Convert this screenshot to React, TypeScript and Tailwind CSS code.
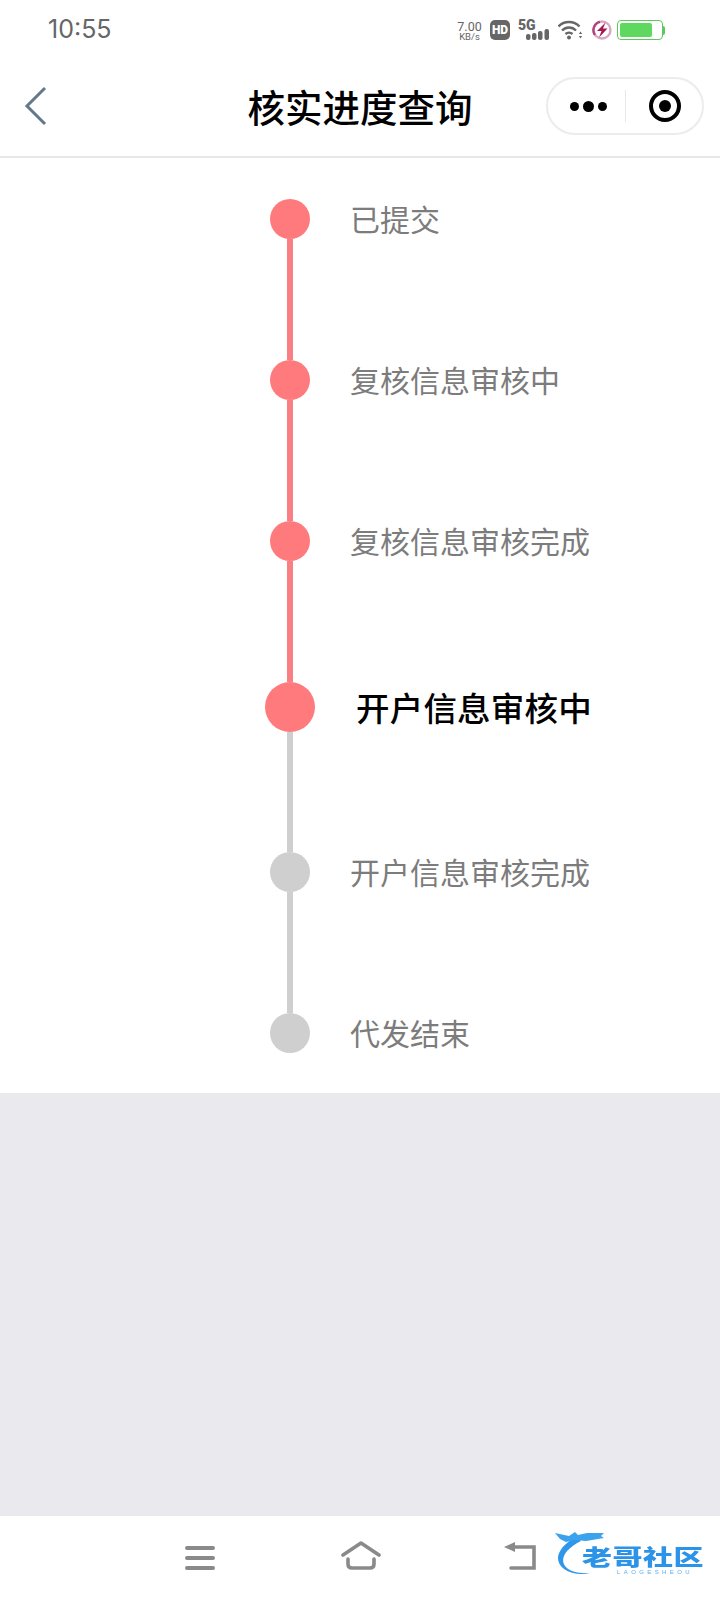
const cjk = "font-['Noto_Sans_CJK_SC','Noto_Sans',sans-serif]";

type Step = { label: string; state: "done" | "current" | "todo" };

const steps: Step[] = [
  { label: "已提交", state: "done" },
  { label: "复核信息审核中", state: "done" },
  { label: "复核信息审核完成", state: "done" },
  { label: "开户信息审核中", state: "current" },
  { label: "开户信息审核完成", state: "todo" },
  { label: "代发结束", state: "todo" },
];

function StatusIcons() {
  return (
    <div className="flex items-center">
      <div className="w-[27px] text-center font-['Roboto',sans-serif] text-[#666] leading-[10px] mr-[7px] mt-[4px]">
        <div className="text-[12.5px]">7.00</div>
        <div className="text-[9.5px]">KB/s</div>
      </div>
      {/* HD */}
      <div className="w-[20px] h-[20px] rounded-[5px] bg-[#666] text-white text-[12px] font-black font-['Roboto',sans-serif] flex items-center justify-center mr-[8px]">
        HD
      </div>
      {/* 5G + signal */}
      <div className="relative w-[31px] h-[20px] mr-[9px]">
        <span className="absolute left-0 top-[-3px] text-[14px] leading-[16px] font-black font-['Roboto',sans-serif] text-[#666]">5G</span>
        <svg className="absolute left-[8px] top-[9px]" width="23" height="11" viewBox="0 0 23 11" fill="#666">
          <rect x="0" y="5" width="4.5" height="6" rx="2" />
          <rect x="6" y="4" width="4.5" height="7" rx="2" />
          <rect x="12" y="2" width="4.5" height="9" rx="2" />
          <rect x="18.5" y="0" width="4.5" height="11" rx="2" />
        </svg>
      </div>
      {/* wifi */}
      <svg className="mr-[10px]" width="24" height="20" viewBox="0 0 24 20" fill="none" stroke="#666" strokeWidth="2.4">
        <path d="M0.5 6.5C6 0.5 16 0.5 21.5 6.5" />
        <path d="M4 10.5C8 6.5 14 6.5 18 10.5" />
        <path d="M7.5 14C9.5 12.2 12.5 12.2 14.5 14" />
        <circle cx="11" cy="17.5" r="2" fill="#666" stroke="none" />
        <path d="M22.5 11.5l-1.6 2.5h3.2zM22.5 18.5l-1.6-2.5h3.2z" fill="#666" stroke="none" />
      </svg>
      {/* charge badge */}
      <svg className="mr-[5px]" width="20" height="20" viewBox="0 0 20 20">
        <circle cx="10" cy="10" r="8.5" fill="none" stroke="#d9a8c2" strokeWidth="2.4" />
        <path d="M3 15A8.5 8.5 0 0 1 8 1.8" fill="none" stroke="#b0457f" strokeWidth="2.4" />
        <path d="M13.5 2.5L5 11h4.5L7 17.5 15.5 8.5H11z" fill="#a8174f" />
      </svg>
      {/* battery */}
      <div className="flex items-center">
        <div className="w-[46px] h-[20px] rounded-[4px] border border-[#5cc95c] p-[2px]">
          <div className="w-[32px] h-full rounded-[2px] bg-[#5fd85f]" />
        </div>
        <div className="w-[2px] h-[9px] rounded-r-[2px] bg-[#5cc95c]" />
      </div>
    </div>
  );
}

function StepRow({ step, showLine }: { step: Step; showLine: boolean }) {
  const current = step.state === "current";
  const dotColor = step.state === "todo" ? "bg-[#cfcfcf]" : "bg-[#ff7a7d]";
  return (
    <>
      <div className={`flex items-center ${current ? "h-[50px]" : "h-[40px]"}`}>
        <div className="w-[580px] flex justify-center shrink-0 -mr-[230px]">
          <div className={`rounded-full ${dotColor} ${current ? "w-[50px] h-[50px]" : "w-[40px] h-[40px]"}`} />
        </div>
        <span
          className={
            current
              ? "ml-[6px] text-[33.5px] font-medium tracking-[0.2px] text-black leading-none whitespace-nowrap"
              : "text-[30px] text-[#7c7c7c] leading-none whitespace-nowrap -mt-[2px]"
          }
        >
          {step.label}
        </span>
      </div>
      {showLine && (
        <div className="w-[580px] flex justify-center">
          <div
            className={`w-[6px] ${step.state === "done" ? "bg-[#f97f84]" : "bg-[#cfcfcf]"} ${
              current ? "h-[120px]" : "h-[121px]"
            }`}
          />
        </div>
      )}
    </>
  );
}

function Logo() {
  return (
    <div className="absolute left-[552px] top-[1531px] w-[160px] h-[50px] blur-[0.4px]">
      <svg className="absolute left-0 top-0" width="60" height="50" viewBox="0 0 60 50" fill="none">
        <path d="M24 6C7 15 0 29 12 38c7 5 17 6 26 4-9 0-20 0-25-7C8 28 13 18 29 10z" fill="#2f97ea" />
        <path d="M3 2l14 3 6-4 3 3 9-2 17 0-3 3 3 2-18 3-12-1-8 2-6-3z" fill="#3ba3ee" />
      </svg>
      <div className={`absolute left-[30px] top-[12px] scale-y-[0.72] origin-center text-[#2b93e8] text-[30px] tracking-[0.5px] leading-[26px] font-black whitespace-nowrap ${cjk}`}>
        老哥社区
      </div>
      <div className="absolute left-[65px] top-[38px] text-[#5aaeea] text-[6px] leading-[6px] tracking-[3.4px] font-['Liberation_Sans',sans-serif] whitespace-nowrap">
        LAOGESHEOU
      </div>
    </div>
  );
}

export default function App() {
  return (
    <div className={`relative w-[720px] h-[1600px] flex flex-col bg-[#e9e9ee] overflow-hidden ${cjk}`}>
      {/* Status bar */}
      <div className="h-[60px] bg-white flex items-center justify-between pl-[48px] pr-[55px]">
        <span className="text-[25px] text-[#666] font-['Inter',sans-serif] leading-none -mt-[2px]">10:55</span>
        <StatusIcons />
      </div>

      {/* Title bar */}
      <div className="relative h-[98px] bg-white border-b-2 border-[#e8e8e8] flex items-center justify-center">
        <svg className="absolute left-[24px] top-[25px]" width="24" height="42" viewBox="0 0 24 42" fill="none" stroke="#63788a" strokeWidth="3">
          <path d="M21 3L3 21 21 39" />
        </svg>
        <h1 className="text-[37.5px] font-medium text-black leading-none -mt-[5px]">核实进度查询</h1>
        <div className="absolute left-[546px] top-[17px] w-[158px] h-[58px] rounded-full border-2 border-[#ececec] bg-white flex items-center">
          <div className="w-[77px] flex items-center justify-center gap-[4px] pl-[3px]">
            <span className="w-[9px] h-[9px] rounded-full bg-black" />
            <span className="w-[11px] h-[11px] rounded-full bg-black" />
            <span className="w-[9px] h-[9px] rounded-full bg-black" />
          </div>
          <div className="w-[1px] h-[32px] bg-[#e8e8e8]" />
          <div className="flex-1 flex items-center justify-center pl-[1px]">
            <div className="w-[32px] h-[32px] rounded-full border-[4px] border-black flex items-center justify-center">
              <div className="w-[12px] h-[12px] rounded-full bg-black" />
            </div>
          </div>
        </div>
      </div>

      {/* Steps */}
      <div className="h-[935px] bg-white pt-[41px] flex flex-col">
        {steps.map((step, i) => (
          <StepRow key={step.label} step={step} showLine={i < steps.length - 1} />
        ))}
      </div>

      <div className="flex-1" />

      {/* Bottom nav */}
      <div className="h-[84px] bg-white flex items-center">
        <svg className="ml-[185px]" width="30" height="24" viewBox="0 0 30 24" fill="none" stroke="#8a8a8a" strokeWidth="4" strokeLinecap="round">
          <path d="M2 2h26M2 12h26M2 22h26" />
        </svg>
        <svg className="ml-[126px] -mt-[4px]" width="40" height="32" viewBox="0 0 40 32" fill="none" stroke="#8a8a8a" strokeWidth="3.6" strokeLinecap="round" strokeLinejoin="round">
          <path d="M2 15L20 3l18 12" />
          <path d="M7 19v5q0 4 4 4h18q4 0 4-4v-5" />
        </svg>
        <svg className="ml-[122px] -mt-[2px]" width="34" height="30" viewBox="0 0 34 30" fill="none" stroke="#8a8a8a" strokeWidth="3.6" strokeLinecap="round">
          <path d="M10 5h21v21H8" />
          <path d="M12 0L1 5l11 5z" fill="#8a8a8a" stroke="none" />
        </svg>
      </div>

      <Logo />
    </div>
  );
}
